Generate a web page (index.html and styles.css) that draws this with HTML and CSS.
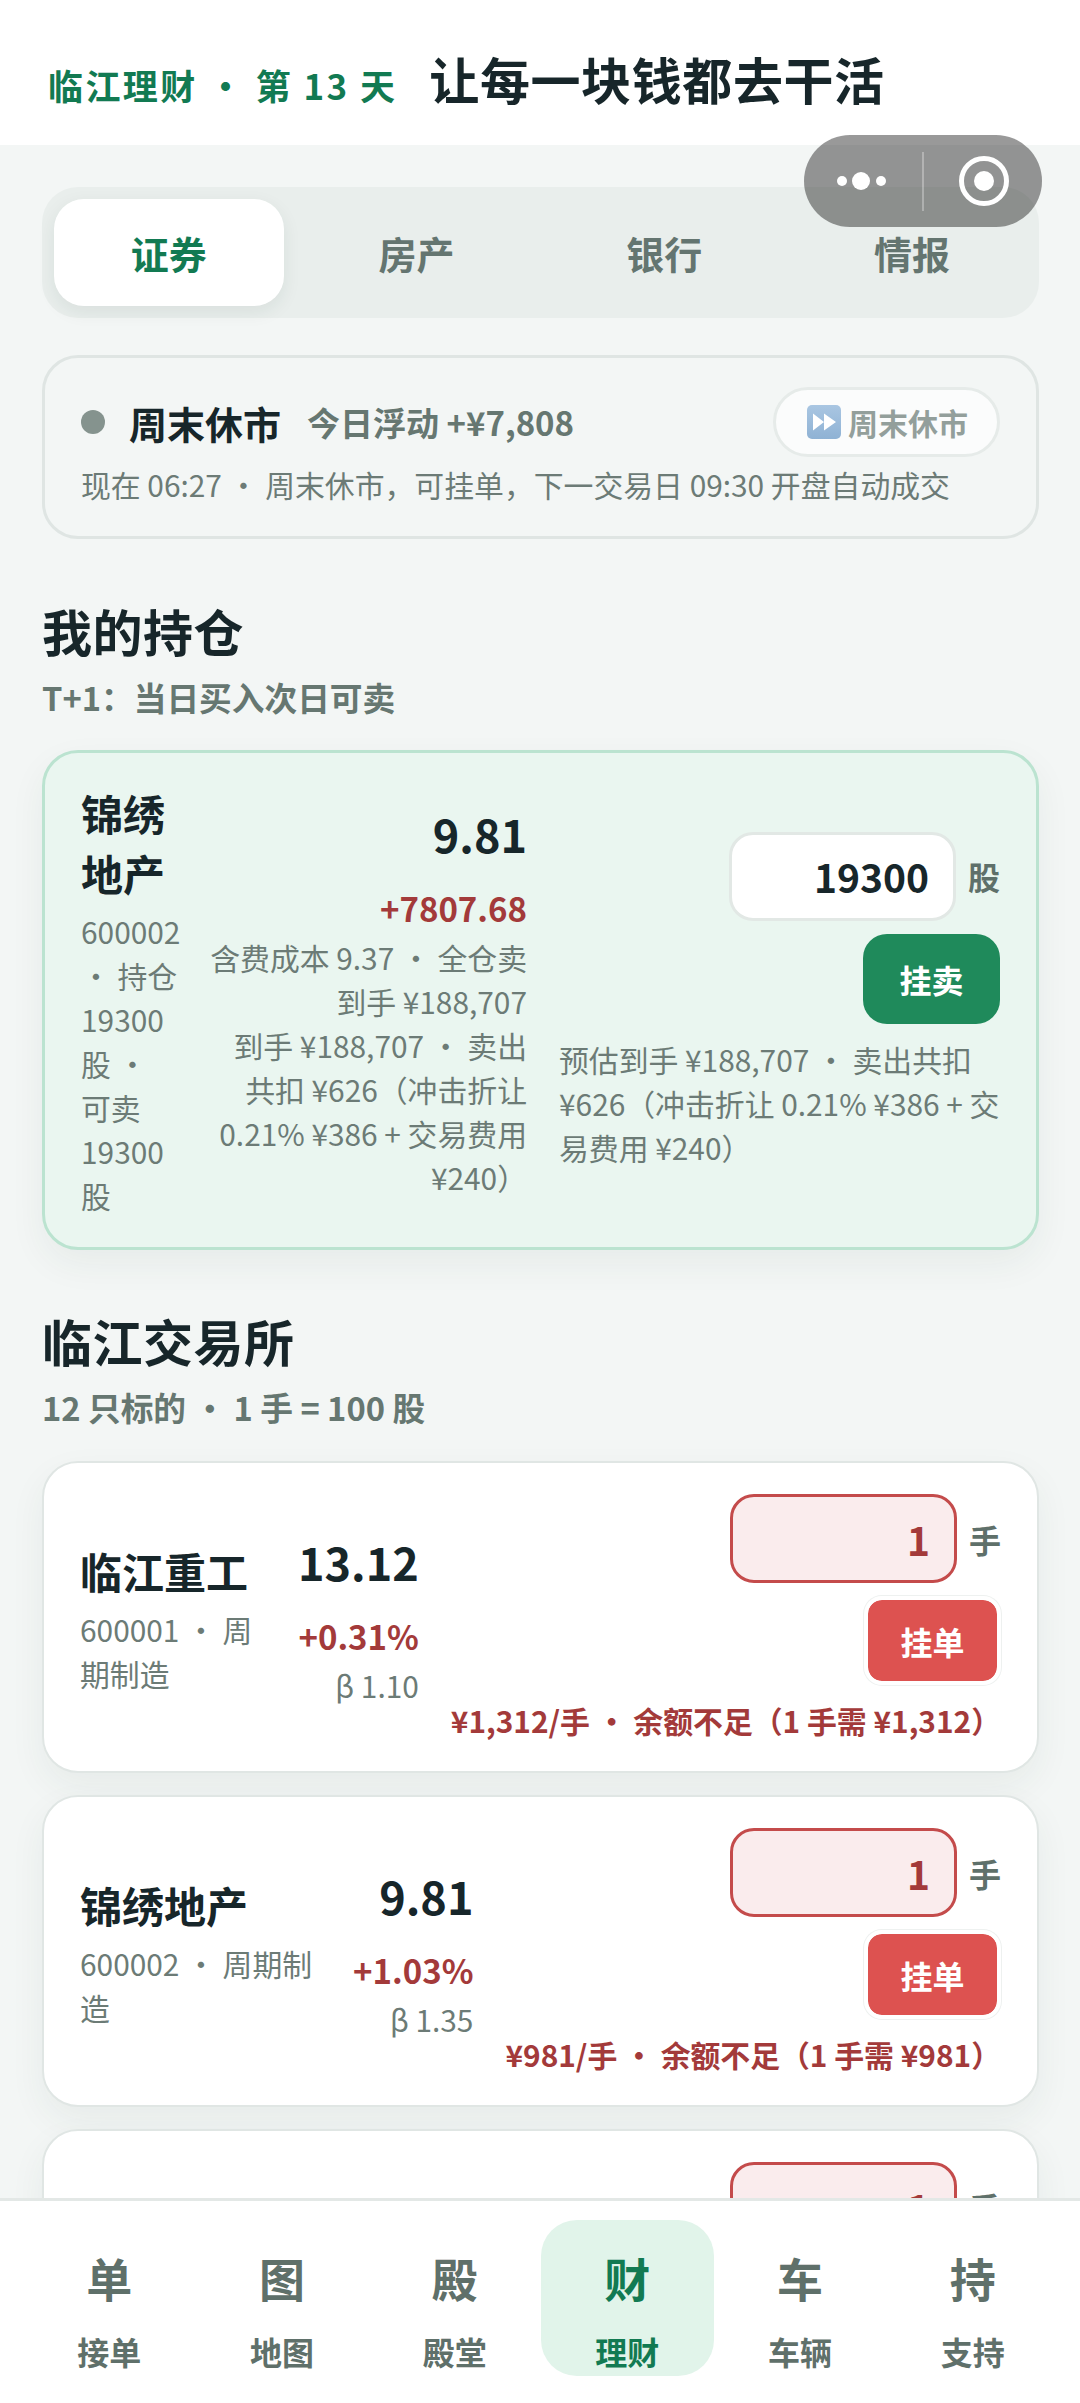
FILE: index.html
```html
<!DOCTYPE html>
<html lang="zh-CN">
<head>
<meta charset="utf-8">
<title>临江理财</title>
<link rel="stylesheet" href="styles.css">
</head>
<body>
<div class="app">
  <header class="topbar">
    <span class="eyebrow">临江理财 · 第 13 天</span>
    <h1 class="headline">让每一块钱都去干活</h1>
  </header>

  <div class="capsule">
    <svg class="capsule-dots" width="70" height="24" viewBox="0 0 70 24"><circle cx="11" cy="12" r="5" fill="#fff"/><circle cx="30" cy="12" r="9" fill="#fff"/><circle cx="50" cy="12" r="5" fill="#fff"/></svg>
    <span class="capsule-line"></span>
    <svg class="capsule-target" width="52" height="52" viewBox="0 0 52 52"><circle cx="26" cy="26" r="22.5" fill="none" stroke="#fff" stroke-width="5"/><circle cx="26" cy="26" r="10" fill="#fff"/></svg>
  </div>

  <main class="content">
    <nav class="tabs">
      <a class="tab tab-active">证券</a>
      <a class="tab">房产</a>
      <a class="tab">银行</a>
      <a class="tab">情报</a>
    </nav>

    <section class="status">
      <div class="status-top">
        <span class="status-dot"></span>
        <strong class="status-name">周末休市</strong>
        <span class="status-float">今日浮动 +¥7,808</span>
        <span class="chip">
          <svg class="chip-icon" width="34" height="34" viewBox="0 0 34 34"><defs><linearGradient id="ff" x1="0" y1="0" x2="0" y2="1"><stop offset="0" stop-color="#a9c6e2"/><stop offset="1" stop-color="#8fb2d4"/></linearGradient></defs><rect width="34" height="34" rx="5" fill="url(#ff)"/><path d="M6 8.5v17L17 17zM17 8.5v17L29 17z" fill="#fff"/></svg>
          周末休市
        </span>
      </div>
      <p class="status-note">现在 06:27 · 周末休市&#xFF0C;可挂单&#xFF0C;下一交易日 09:30 开盘自动成交</p>
    </section>

    <section class="group group-hold">
      <h2 class="group-title">我的持仓</h2>
      <p class="group-sub">T+1&#xFF1A;当日买入次日可卖</p>
      <article class="card card-hold">
        <div class="stock stock-hold">
          <div class="stock-name">锦绣地产</div>
          <div class="stock-meta">600002 · 持仓 19300 股 · 可卖 19300 股</div>
        </div>
        <div class="quote quote-hold">
          <div class="quote-price">9.81</div>
          <div class="quote-change">+7807.68</div>
          <div class="quote-line">含费成本 9.37 · 全仓卖到手 ¥188,707</div>
          <div class="quote-line">到手 ¥188,707 · 卖出共扣 ¥626&#xFF08;冲击折让 0.21% ¥386 + 交易费用 ¥240&#xFF09;</div>
        </div>
        <div class="trade trade-hold">
          <div class="qty">
            <span class="qty-box">19300</span>
            <span class="qty-unit">股</span>
          </div>
          <button class="btn btn-sell">挂卖</button>
          <p class="trade-note">预估到手 ¥188,707 · 卖出共扣 ¥626&#xFF08;冲击折让 0.21% ¥386 + 交易费用 ¥240&#xFF09;</p>
        </div>
      </article>
    </section>

    <section class="group group-market">
      <h2 class="group-title">临江交易所</h2>
      <p class="group-sub group-sub-market">12 只标的 · 1 手 = 100 股</p>
      <div class="card-list">
        <article class="card">
          <div class="stock">
            <div class="stock-name">临江重工</div>
            <div class="stock-meta">600001 · 周期制造</div>
          </div>
          <div class="quote">
            <div class="quote-price">13.12</div>
            <div class="quote-change">+0.31%</div>
            <div class="quote-line">β 1.10</div>
          </div>
          <div class="trade">
            <div class="qty">
              <span class="qty-box qty-box-warn">1</span>
              <span class="qty-unit">手</span>
            </div>
            <button class="btn btn-order">挂单</button>
            <p class="trade-warn">¥1,312/手 · 余额不足&#xFF08;1 手需 ¥1,312&#xFF09;</p>
          </div>
        </article>
        <article class="card">
          <div class="stock">
            <div class="stock-name">锦绣地产</div>
            <div class="stock-meta">600002 · 周期制造</div>
          </div>
          <div class="quote">
            <div class="quote-price">9.81</div>
            <div class="quote-change">+1.03%</div>
            <div class="quote-line">β 1.35</div>
          </div>
          <div class="trade">
            <div class="qty">
              <span class="qty-box qty-box-warn">1</span>
              <span class="qty-unit">手</span>
            </div>
            <button class="btn btn-order">挂单</button>
            <p class="trade-warn">¥981/手 · 余额不足&#xFF08;1 手需 ¥981&#xFF09;</p>
          </div>
        </article>
        <article class="card card-clipped">
          <div class="stock"></div>
          <div class="trade">
            <div class="qty">
              <span class="qty-box qty-box-warn">1</span>
              <span class="qty-unit">手</span>
            </div>
          </div>
        </article>
      </div>
    </section>
  </main>

  <nav class="bottom">
    <a class="bottom-item"><span class="bottom-glyph">单</span><span class="bottom-label">接单</span></a>
    <a class="bottom-item"><span class="bottom-glyph">图</span><span class="bottom-label">地图</span></a>
    <a class="bottom-item"><span class="bottom-glyph">殿</span><span class="bottom-label">殿堂</span></a>
    <a class="bottom-item bottom-active"><span class="bottom-glyph">财</span><span class="bottom-label">理财</span></a>
    <a class="bottom-item"><span class="bottom-glyph">车</span><span class="bottom-label">车辆</span></a>
    <a class="bottom-item"><span class="bottom-glyph">持</span><span class="bottom-label">支持</span></a>
  </nav>
</div>
</body>
</html>
```

FILE: styles.css
```css
* { box-sizing: border-box; }
html, body { margin: 0; padding: 0; }
body {
  font-family: "Noto Sans CJK SC", "Noto Sans", sans-serif;
  color: #17262a;
  background: #f3f6f5;
}
h1, h2, p { margin: 0; }

.app {
  position: relative;
  height: 100vh;
  display: flex;
  flex-direction: column;
  overflow: hidden;
}

.topbar {
  flex: none;
  height: 145px;
  background: #fff;
  display: flex;
  align-items: baseline;
  gap: 32px;
  padding: 43px 48px 0;
}
.eyebrow { font-size: 35px; font-weight: 700; color: #127a52; letter-spacing: 2.4px; line-height: 1.4; }
.headline { font-size: 50px; font-weight: 700; color: #17262a; line-height: 1.4; letter-spacing: .6px; }

.capsule {
  position: absolute;
  left: 804px;
  top: 135px;
  width: 238px;
  height: 92px;
  border-radius: 46px;
  background: rgba(0, 0, 0, .4);
  z-index: 5;
}
.capsule-dots { position: absolute; left: 27px; top: 34px; }
.capsule-line { position: absolute; left: 118px; top: 17px; width: 2px; height: 59px; background: rgba(255, 255, 255, .3); }
.capsule-target { position: absolute; left: 154px; top: 20px; }

.content {
  flex: 1;
  min-height: 0;
  overflow: hidden;
  padding: 42px 41px 0 42px;
}

.tabs {
  display: grid;
  grid-template-columns: repeat(4, 1fr);
  gap: 18px;
  padding: 12px;
  height: 131px;
  border-radius: 36px;
  background: #e9eeec;
}
.tab {
  display: flex;
  align-items: center;
  justify-content: center;
  border-radius: 30px;
  font-size: 38px;
  font-weight: 700;
  color: #647570;
}
.tab-active {
  background: #fff;
  color: #127a52;
  box-shadow: 0 6px 18px rgba(30, 60, 50, .08);
}

.status {
  margin-top: 37px;
  height: 184px;
  border: 3px solid #dfe5e3;
  border-radius: 36px;
  padding: 30px 36px 0;
}
.status-top { display: flex; align-items: center; height: 68px; }
.status-dot { width: 24px; height: 24px; border-radius: 50%; background: #85938e; margin-right: 24px; }
.status-name { font-size: 38px; font-weight: 700; color: #17262a; margin-right: 26px; }
.status-float { font-size: 33px; font-weight: 700; color: #667771; }
.chip {
  margin-left: auto;
  height: 70px;
  padding: 0 29px 0 31px;
  display: flex;
  align-items: center;
  gap: 7px;
  border: 3px solid #e6ebe9;
  border-radius: 35px;
  background: #fbfcfc;
  font-size: 30px;
  font-weight: 700;
  color: #939f9b;
}
.status-note { margin-top: 6px; font-size: 29.85px; line-height: 44px; color: #6c7b76; }

.group-hold { margin-top: 56px; }
.group-market { margin-top: 55px; }
.group-title { font-size: 50px; font-weight: 700; line-height: 70px; color: #17262a; letter-spacing: .5px; }
.group-sub { margin-top: 10px; font-size: 32.7px; font-weight: 700; line-height: 44px; color: #667771; margin-bottom: 31px; }
.group-sub-market { margin-bottom: 32px; }

.card {
  display: flex;
  align-items: center;
  gap: 32px;
  padding: 31px 36px 29px;
  background: #fff;
  border: 2px solid #e0e6e4;
  border-radius: 36px;
  box-shadow: 0 14px 36px rgba(30, 60, 50, .06);
}
.card-list { display: flex; flex-direction: column; gap: 22px; }
.card-hold { background: #eaf6f0; border: 3px solid #bbe3d0; gap: 26px; padding: 30px 36px; }
.card-clipped { align-items: flex-start; }

.stock { flex: 1 1 0; min-width: 0; }
.stock-hold { flex: none; width: 100px; }
.stock-name { font-size: 42px; font-weight: 700; line-height: 60px; color: #17262a; }
.stock-meta { margin-top: 6px; font-size: 29.85px; line-height: 44px; color: #6c7b76; }

.quote { flex: none; text-align: right; }
.quote-hold { width: 320px; flex: none; }
.quote-price { font-size: 45px; font-weight: 700; line-height: 66px; color: #17262a; }
.quote-change { margin-top: 17px; font-size: 33px; font-weight: 700; line-height: 48px; color: #a33a3a; }
.quote-line { font-size: 29.85px; line-height: 44px; color: #6c7b76; margin-top: 3px; }
.quote-line + .quote-line { margin-top: 0; }

.trade { flex: none; display: flex; flex-direction: column; align-items: flex-end; gap: 13px; }
.trade-hold { flex: 1 1 0; min-width: 0; align-items: stretch; margin-left: 6px; }
.qty { display: flex; align-items: center; justify-content: flex-end; gap: 12px; }
.qty-box {
  width: 227px;
  height: 89px;
  padding: 0 24px;
  display: flex;
  align-items: center;
  justify-content: flex-end;
  background: #fff;
  border: 3px solid #e2e8e5;
  border-radius: 24px;
  font-size: 39px;
  font-weight: 700;
  color: #17262a;
}
.qty-box-warn { background: #faeced; border-color: #c44b4b; color: #a33a3a; }
.qty-unit { font-size: 32px; font-weight: 700; color: #5f706a; }

.btn {
  font-family: inherit;
  font-size: 32px;
  font-weight: 700;
  color: #fff;
  width: 137px;
  cursor: pointer;
}
.btn-sell { height: 90px; border: 0; border-radius: 24px; background: #1f8a5b; align-self: flex-end; }
.btn-order { height: 89px; border: 4px solid #fff; border-radius: 18px; background: #dd5250; background-clip: padding-box; box-shadow: 0 0 0 1px #eef1f0; }
.trade-note { font-size: 29.85px; line-height: 44px; color: #6c7b76; }
.trade-warn { font-size: 29.85px; font-weight: 700; line-height: 44px; color: #a33a3a; white-space: nowrap; }

.bottom {
  flex: none;
  height: 205px;
  display: grid;
  grid-template-columns: repeat(6, 1fr);
  padding: 19px 21px 27px 23px;
  background: #fff;
  border-top: 3px solid #e3e8e6;
}
.bottom-item {
  display: flex;
  flex-direction: column;
  align-items: center;
  border-radius: 36px;
  color: #5f706a;
  font-weight: 700;
}
.bottom-glyph { font-size: 46px; line-height: 64px; margin-top: 25px; }
.bottom-label { font-size: 32px; line-height: 44px; margin-top: 20px; }
.bottom-active { background: #e1f4ea; color: #127a52; }
```
